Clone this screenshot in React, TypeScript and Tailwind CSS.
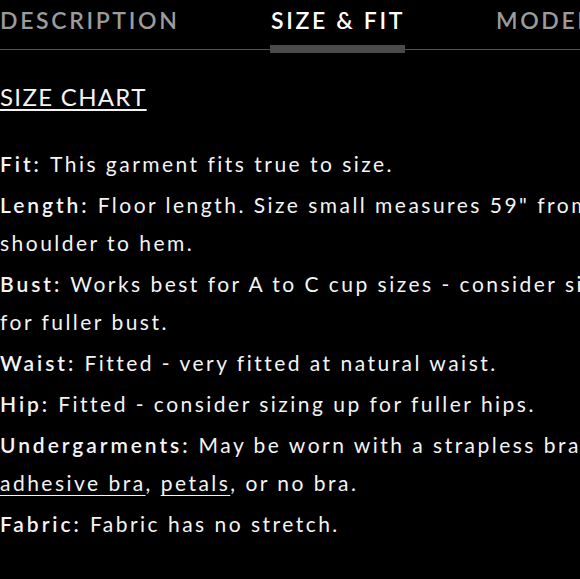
import React from "react";

const font = { fontFamily: "Lato, 'Open Sans', sans-serif" };

function Row({ label, children }: { label?: string; children: React.ReactNode }) {
  return (
    <p className="mb-[3px] whitespace-nowrap text-[21px] leading-[38px] tracking-[0.118em] text-[#f4f4f4]">
      {label && <span className="font-semibold tracking-[0.14em]">{label} </span>}
      {children}
    </p>
  );
}

export default function App() {
  return (
    <div className="h-[579px] w-[580px] overflow-hidden bg-black" style={font}>
      <div className="pt-[5px]">
        <div className="flex whitespace-nowrap text-[23px] font-semibold leading-[30px] tracking-[0.115em]">
          <div className="w-[270px] shrink-0 text-[#9b9b9b]">DESCRIPTION</div>
          <div className="w-[226px] shrink-0 pl-[1px] text-white">SIZE &amp; FIT</div>
          <div className="shrink-0 text-[#9b9b9b]">MODEL</div>
        </div>
        <div className="mt-[10px] flex h-[8px] items-center">
          <div className="h-px w-[270px] shrink-0 bg-[#555]" />
          <div className="h-[8px] w-[135px] shrink-0 bg-[#4a4a4a]" />
          <div className="h-px flex-1 bg-[#555]" />
        </div>
      </div>
      <div className="mt-[28px]">
        <span className="text-[24px] leading-[32px] tracking-[0.055em] text-[#f4f4f4] underline decoration-2 underline-offset-[3px]">
          SIZE CHART
        </span>
      </div>
      <div className="mt-[32px]">
        <Row label="Fit:">This garment fits true to size.</Row>
        <Row label="Length:">
          Floor length. Size small measures 59" from
          <br />
          shoulder to hem.
        </Row>
        <Row label="Bust:">
          Works best for A to C cup sizes - consider sizing up
          <br />
          for fuller bust.
        </Row>
        <Row label="Waist:">Fitted - very fitted at natural waist.</Row>
        <Row label="Hip:">Fitted - consider sizing up for fuller hips.</Row>
        <Row label="Undergarments:">
          May be worn with a strapless bra,
          <br />
          <span className="underline decoration-1 underline-offset-[4px]">adhesive bra</span>,{" "}
          <span className="underline decoration-1 underline-offset-[4px]">petals</span>, or no bra.
        </Row>
        <Row label="Fabric:">Fabric has no stretch.</Row>
      </div>
    </div>
  );
}
